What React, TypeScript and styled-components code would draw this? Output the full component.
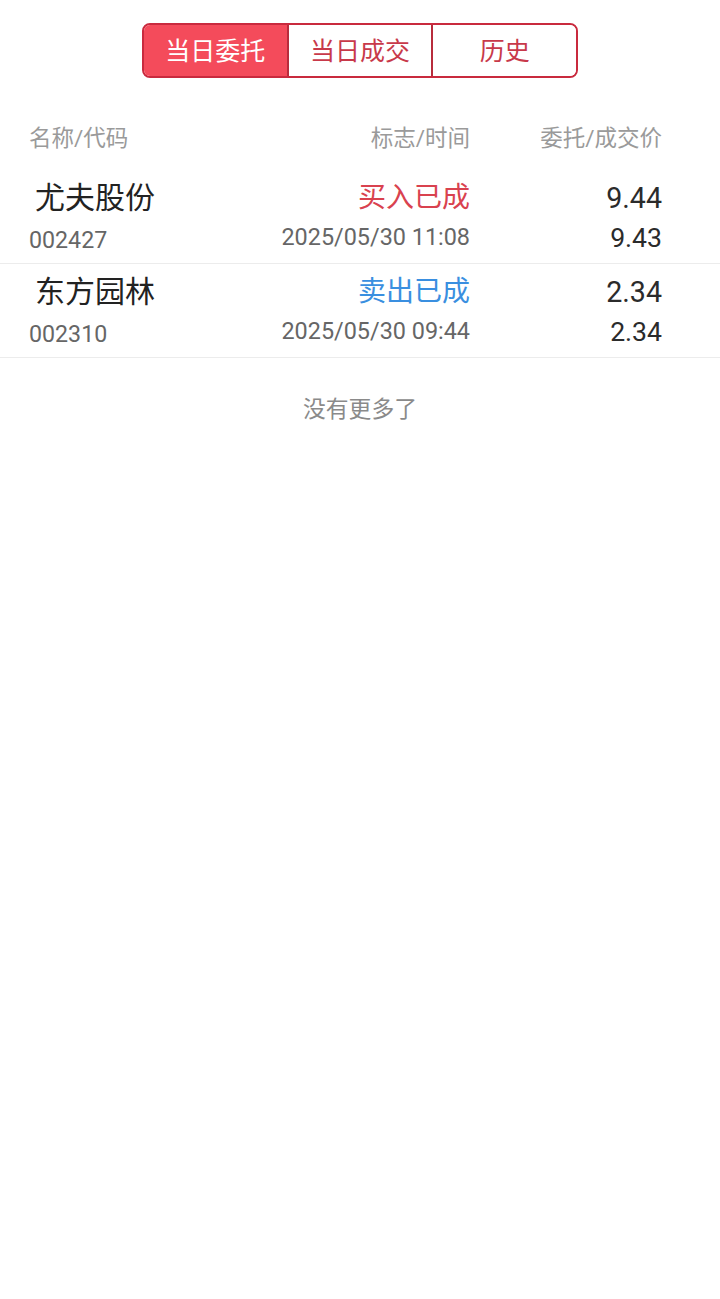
import React, { useState } from 'react';
import styled, { createGlobalStyle } from 'styled-components';

const GlobalStyle = createGlobalStyle`
    body {
        margin: 0;
        background: #ffffff;
        font-family: Roboto, "Noto Sans CJK SC", sans-serif;
    }
`;

const Page = styled.div`
    width: 720px;
    min-height: 1299px;
    background: #fff;
`;

const TabBar = styled.div`
    display: flex;
    justify-content: center;
    padding-top: 23px;
`;

const Segments = styled.div`
    display: flex;
    width: 436px;
    height: 55px;
    box-sizing: border-box;
    border: 2px solid #c92a3e;
    border-radius: 8px;
    overflow: hidden;
`;

const Segment = styled.div<{ active?: boolean }>`
    flex: 1;
    display: flex;
    align-items: center;
    justify-content: center;
    padding-bottom: 3px;
    font-size: 25px;
    color: ${(props) => (props.active ? '#ffffff' : '#c8394a')};
    background: ${(props) => (props.active ? '#f44b5b' : '#ffffff')};

    & + & {
        border-left: 2px solid #b82c3c;
    }
`;

const Grid = styled.div`
    display: grid;
    grid-template-columns: 1fr 240px 192px;
    padding: 0 58px 0 29px;
`;

const HeaderRow = styled(Grid)`
    padding-top: 45px;
    height: 92px;
    box-sizing: border-box;
    font-size: 22.5px;
    color: #9a9a9a;
    line-height: 30px;
`;

const HeadCell = styled.div<{ right?: boolean }>`
    text-align: ${(props) => (props.right ? 'right' : 'left')};
`;

const Row = styled(Grid)`
    height: 94px;
    box-sizing: border-box;
    border-bottom: 1px solid #ececec;
    align-content: start;
    padding-top: 10px;
`;

const Cell = styled.div<{ right?: boolean }>`
    display: flex;
    flex-direction: column;
    align-items: ${(props) => (props.right ? 'flex-end' : 'flex-start')};
`;

const Name = styled.div`
    font-size: 30px;
    line-height: 36px;
    color: #222;
    padding-left: 6px;
`;

const Code = styled.div`
    font-size: 23.2px;
    line-height: 32px;
    margin-top: 8px;
    color: #666;
`;

const Status = styled.div<{ side: 'buy' | 'sell' }>`
    font-size: 28px;
    line-height: 36px;
    color: ${(props) => (props.side === 'buy' ? '#d9424f' : '#3a8fe0')};
`;

const Time = styled.div`
    font-size: 23.4px;
    line-height: 32px;
    margin-top: 5px;
    color: #666;
`;

const Price = styled.div`
    font-size: 28.6px;
    line-height: 36px;
    color: #2b2b2b;
`;

const DealPrice = styled.div`
    font-size: 26.6px;
    line-height: 32px;
    margin-top: 6px;
    color: #2b2b2b;
`;

const Footer = styled.div`
    text-align: center;
    font-size: 22.8px;
    color: #8a8a8a;
    padding-top: 33px;
`;

const tabs = ['当日委托', '当日成交', '历史'];

const orders = [
    { name: '尤夫股份', code: '002427', side: 'buy' as const, status: '买入已成', time: '2025/05/30 11:08', price: '9.44', deal: '9.43' },
    { name: '东方园林', code: '002310', side: 'sell' as const, status: '卖出已成', time: '2025/05/30 09:44', price: '2.34', deal: '2.34' },
];

const App = (): JSX.Element => {
    const [tab, setTab] = useState(0);

    return (
        <>
            <GlobalStyle />
            <Page>
                <TabBar>
                    <Segments>
                        {tabs.map((t, i) => (
                            <Segment key={t} active={i === tab} onClick={() => setTab(i)}>
                                {t}
                            </Segment>
                        ))}
                    </Segments>
                </TabBar>
                <HeaderRow>
                    <HeadCell>名称/代码</HeadCell>
                    <HeadCell right>标志/时间</HeadCell>
                    <HeadCell right>委托/成交价</HeadCell>
                </HeaderRow>
                {orders.map((o) => (
                    <Row key={o.code}>
                        <Cell>
                            <Name>{o.name}</Name>
                            <Code>{o.code}</Code>
                        </Cell>
                        <Cell right>
                            <Status side={o.side}>{o.status}</Status>
                            <Time>{o.time}</Time>
                        </Cell>
                        <Cell right>
                            <Price>{o.price}</Price>
                            <DealPrice>{o.deal}</DealPrice>
                        </Cell>
                    </Row>
                ))}
                <Footer>没有更多了</Footer>
            </Page>
        </>
    );
};

export default App;
